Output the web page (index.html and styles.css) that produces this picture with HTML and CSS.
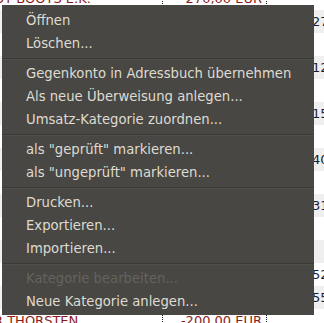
FILE: index.html
```html
<!DOCTYPE html>
<html lang="de">
<head>
    <meta charset="UTF-8">
    <title>Umsätze</title>
    <link rel="stylesheet" href="styles.css">
</head>
<body>

<div class="sheet">
    <div class="row"><div class="cell name">OT BOOTS E.K.</div><div class="cell amount">-270,00 EUR</div><div class="cell extra"></div></div>
    <div class="row alt"><div class="cell name"></div><div class="cell amount"></div><div class="cell extra">27</div></div>
    <div class="row"><div class="cell name"></div><div class="cell amount"></div><div class="cell extra"></div></div>
    <div class="row alt"><div class="cell name"></div><div class="cell amount"></div><div class="cell extra">12</div></div>
    <div class="row"><div class="cell name"></div><div class="cell amount"></div><div class="cell extra"></div></div>
    <div class="row alt"><div class="cell name"></div><div class="cell amount"></div><div class="cell extra">15</div></div>
    <div class="row"><div class="cell name"></div><div class="cell amount"></div><div class="cell extra"></div></div>
    <div class="row alt"><div class="cell name"></div><div class="cell amount"></div><div class="cell extra">40</div></div>
    <div class="row"><div class="cell name"></div><div class="cell amount"></div><div class="cell extra"></div></div>
    <div class="row alt"><div class="cell name"></div><div class="cell amount"></div><div class="cell extra">31</div></div>
    <div class="row"><div class="cell name"></div><div class="cell amount"></div><div class="cell extra"></div></div>
    <div class="row alt"><div class="cell name"></div><div class="cell amount"></div><div class="cell extra"></div></div>
    <div class="row"><div class="cell name"></div><div class="cell amount"></div><div class="cell extra">52</div></div>
    <div class="row alt"><div class="cell name"></div><div class="cell amount"></div><div class="cell extra">55</div></div>
    <div class="row"><div class="cell name">R THORSTEN</div><div class="cell amount">-200,00 EUR</div><div class="cell extra"></div></div>
</div>

<ul class="menu">
    <li>Öffnen</li>
    <li>Löschen...</li>
    <li class="sep"></li>
    <li>Gegenkonto in Adressbuch übernehmen</li>
    <li>Als neue Überweisung anlegen...</li>
    <li>Umsatz-Kategorie zuordnen...</li>
    <li class="sep"></li>
    <li>als "geprüft" markieren...</li>
    <li>als "ungeprüft" markieren...</li>
    <li class="sep"></li>
    <li>Drucken...</li>
    <li>Exportieren...</li>
    <li>Importieren...</li>
    <li class="sep"></li>
    <li class="disabled">Kategorie bearbeiten...</li>
    <li>Neue Kategorie anlegen...</li>
</ul>

</body>
</html>
```

FILE: styles.css
```css
body {
    margin: 0;
    font-family: "DejaVu Sans", sans-serif;
    background: #ffffff;
    overflow: hidden;
    height: 323px;
}
.sheet {
    margin-top: -13px;
}
.row {
    display: grid;
    grid-template-columns: 163px 104px 1fr;
    height: 23px;
    background: #ffffff;
}
.row.alt {
    background: #efefef;
}
.cell {
    font-size: 13px;
    line-height: 23px;
    white-space: nowrap;
    overflow: hidden;
}
.name {
    color: #8c1c1c;
    border-right: 1px dotted #222;
    text-indent: -6px;
}
.amount {
    color: #8c1c1c;
    text-align: right;
    padding-right: 4px;
    border-right: 1px dotted #222;
}
.extra {
    color: #1c1c2a;
    padding-left: 45px;
}
.menu {
    position: absolute;
    left: 2px;
    top: 5px;
    width: 312px;
    margin: 0;
    padding: 4px 0 2px;
    list-style: none;
    background: #484743;
    color: #dfdbd2;
}
.menu li {
    height: 23px;
    line-height: 23px;
    padding-left: 24px;
    font-size: 13.2px;
    white-space: nowrap;
}
.menu li.disabled {
    color: #65635e;
}
.menu li.sep {
    height: 0;
    margin: 3px 0 2px;
    padding: 0;
    border-top: 1px solid #3a3935;
    border-bottom: 1px solid #504f4a;
}
```
